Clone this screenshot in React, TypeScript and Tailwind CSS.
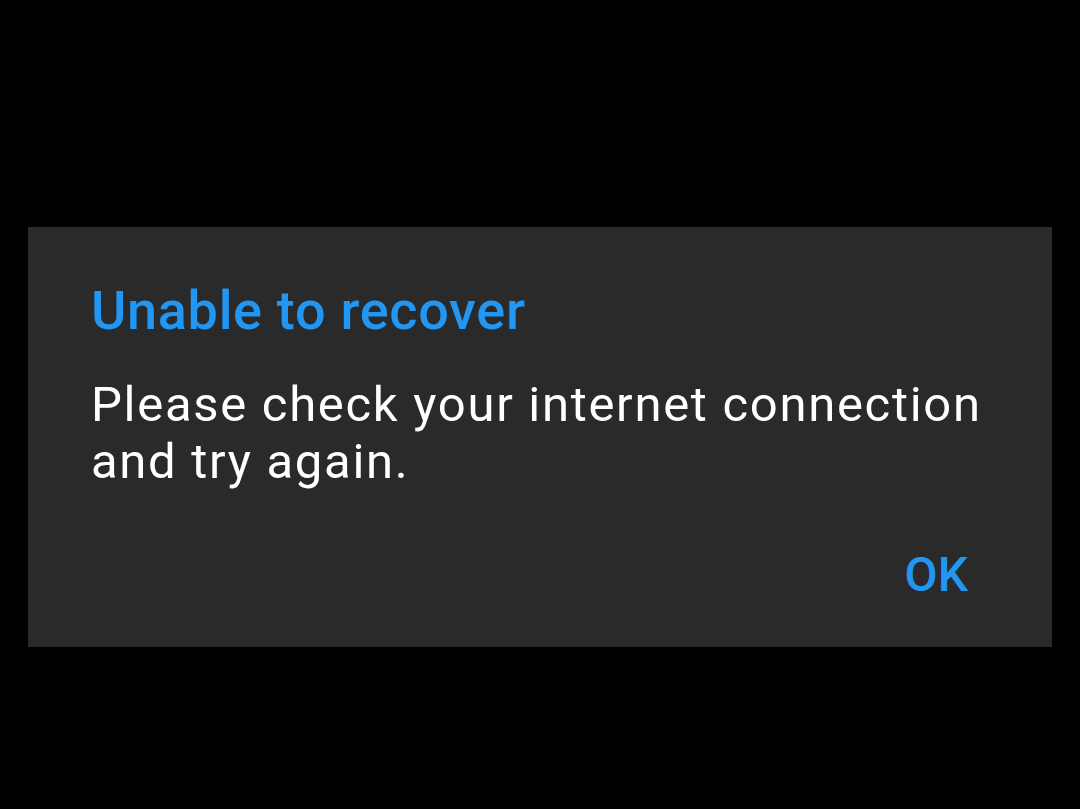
export default function App() {
  return (
    <div className="h-[809px] w-[1080px] bg-black pt-[227px] pl-[28px] font-['Roboto',sans-serif]">
      <div className="flex h-[420px] w-[1024px] flex-col bg-[#2a2a2a] pt-[52px] pl-[63px] pr-[40px]">
        <h1 className="text-[54px] font-medium leading-[64px] tracking-[0.7px] text-[#2196f3]">
          Unable to recover
        </h1>
        <p className="mt-[33px] text-[49px] leading-[57px] tracking-[1.7px] text-white">
          Please check your internet connection and try again.
        </p>
        <div className="mt-[56px] flex justify-end pr-[44px]">
          <button className="text-[48px] font-medium leading-[57px] text-[#2196f3]">
            OK
          </button>
        </div>
      </div>
    </div>
  );
}
